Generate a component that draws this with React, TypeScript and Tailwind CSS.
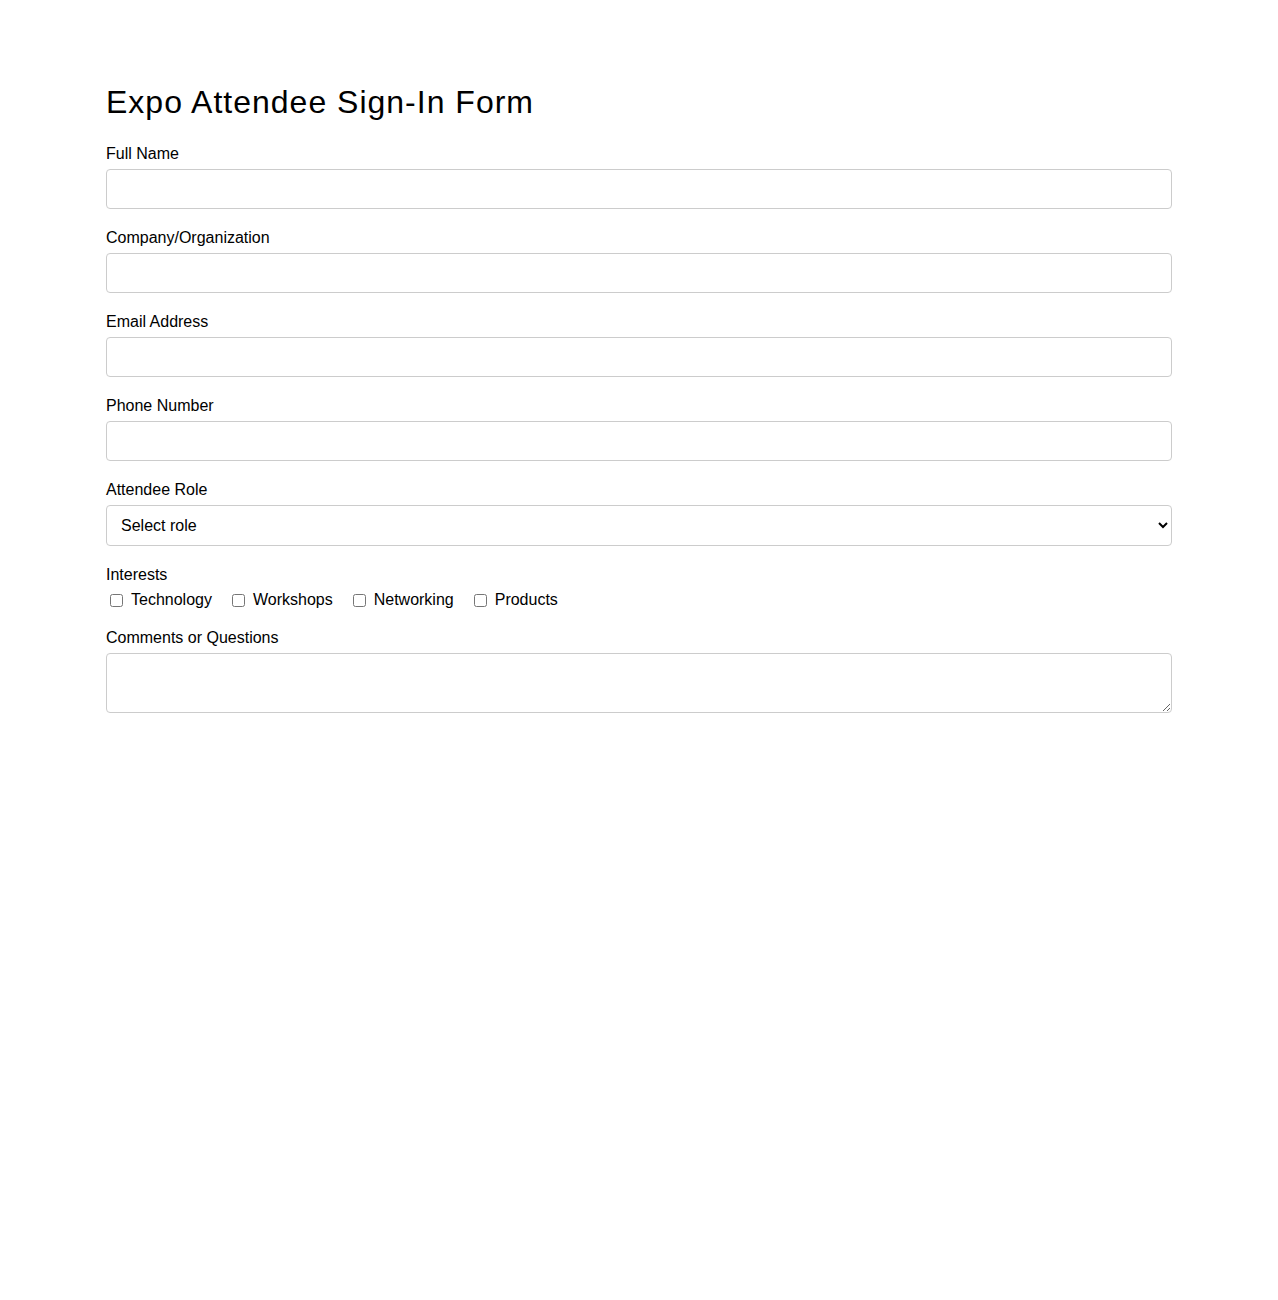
const fields = [
  { id: "fullName", label: "Full Name", type: "text" },
  { id: "company", label: "Company/Organization", type: "text" },
  { id: "email", label: "Email Address", type: "email" },
  { id: "phone", label: "Phone Number", type: "tel" },
];

const interests = ["Technology", "Workshops", "Networking", "Products"];

export default function App() {
  return (
    <div
      className="min-h-screen bg-white text-black"
      style={{ fontFamily: '"Liberation Sans", Arial, sans-serif' }}
    >
      <form className="mx-auto w-[1066px] pt-[84px]">
        <h1 className="mb-6 text-[32px] leading-[37px] tracking-[1px]">Expo Attendee Sign-In Form</h1>

        {fields.map((f) => (
          <div key={f.id} className="mb-5">
            <label htmlFor={f.id} className="mb-[6px] block text-base leading-[18px]">
              {f.label}
            </label>
            <input
              id={f.id}
              type={f.type}
              className="block h-10 w-full rounded border border-[#ccc] px-2 text-base"
            />
          </div>
        ))}

        <div className="mb-5">
          <label htmlFor="role" className="mb-[6px] block text-base leading-[18px]">
            Attendee Role
          </label>
          <select
            id="role"
            defaultValue=""
            className="block h-[41px] w-full rounded border border-[#ccc] bg-white px-[10px] text-base"
          >
            <option value="">Select role</option>
            <option>Exhibitor</option>
            <option>Visitor</option>
            <option>Speaker</option>
            <option>Press</option>
          </select>
        </div>

        <div className="mb-5">
          <span className="block text-base leading-[18px]">Interests</span>
          <div className="mt-[7px] flex items-center gap-4">
            {interests.map((name) => (
              <label key={name} className="flex items-center text-base leading-[18px]">
                <input type="checkbox" className="ml-1 mr-2 h-[13px] w-[13px]" />
                {name}
              </label>
            ))}
          </div>
        </div>

        <div>
          <label htmlFor="comments" className="mb-[6px] block text-base leading-[18px]">
            Comments or Questions
          </label>
          <textarea
            id="comments"
            className="block h-[60px] w-full rounded border border-[#ccc] px-2 py-1 text-base"
          />
        </div>
      </form>
    </div>
  );
}
